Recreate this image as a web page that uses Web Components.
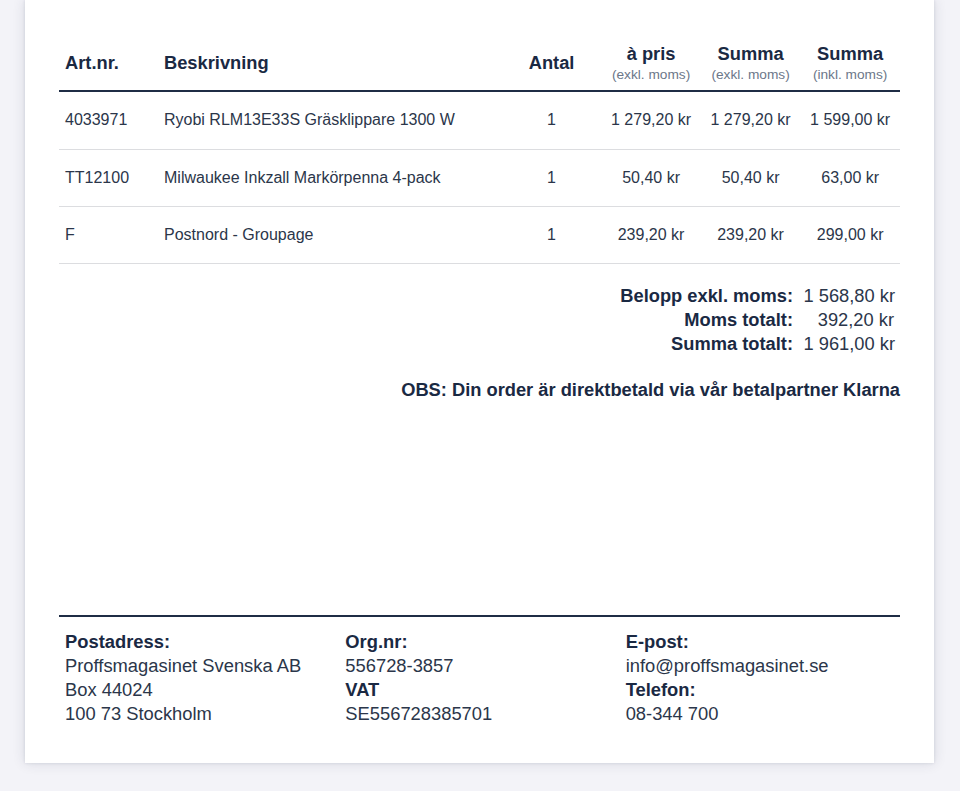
<!DOCTYPE html>
<html lang="sv"><head><meta charset="utf-8"><title>Order</title>
<style>
html,body{margin:0;height:791px;overflow:hidden;background:#f3f3f8;font-family:"Liberation Sans",Arial,sans-serif}
</style></head><body>
<inv-sheet>
  <inv-row head>
    <inv-cell>Art.nr.</inv-cell><inv-cell>Beskrivning</inv-cell>
    <inv-cell center>Antal</inv-cell>
    <inv-cell center sub="(exkl. moms)">à pris</inv-cell>
    <inv-cell center sub="(exkl. moms)">Summa</inv-cell>
    <inv-cell center sub="(inkl. moms)">Summa</inv-cell>
  </inv-row>
  <inv-row first><inv-cell>4033971</inv-cell><inv-cell>Ryobi RLM13E33S Gräsklippare 1300 W</inv-cell><inv-cell center>1</inv-cell><inv-cell center>1 279,20 kr</inv-cell><inv-cell center>1 279,20 kr</inv-cell><inv-cell center>1 599,00 kr</inv-cell></inv-row>
  <inv-row><inv-cell>TT12100</inv-cell><inv-cell>Milwaukee Inkzall Markörpenna 4-pack</inv-cell><inv-cell center>1</inv-cell><inv-cell center>50,40 kr</inv-cell><inv-cell center>50,40 kr</inv-cell><inv-cell center>63,00 kr</inv-cell></inv-row>
  <inv-row><inv-cell>F</inv-cell><inv-cell>Postnord - Groupage</inv-cell><inv-cell center>1</inv-cell><inv-cell center>239,20 kr</inv-cell><inv-cell center>239,20 kr</inv-cell><inv-cell center>299,00 kr</inv-cell></inv-row>
  <inv-totals>
    <inv-total label="Belopp exkl. moms:">1 568,80 kr</inv-total>
    <inv-total label="Moms totalt:" inset>392,20 kr</inv-total>
    <inv-total label="Summa totalt:">1 961,00 kr</inv-total>
  </inv-totals>
  <inv-note>OBS: Din order är direktbetald via vår betalpartner Klarna</inv-note>
  <inv-footer slot="footer">
    <inv-col><b>Postadress:</b><span>Proffsmagasinet Svenska AB</span><span>Box 44024</span><span>100 73 Stockholm</span></inv-col>
    <inv-col><b>Org.nr:</b><span>556728-3857</span><b>VAT</b><span>SE556728385701</span></inv-col>
    <inv-col><b>E-post:</b><span>info@proffsmagasinet.se</span><b>Telefon:</b><span>08-344 700</span></inv-col>
  </inv-footer>
</inv-sheet>
<script>
function def(name, css, html){
  customElements.define(name, class extends HTMLElement{
    constructor(){super();const r=this.attachShadow({mode:'open'});
      r.innerHTML='<style>'+css+'</style>'+html(this);}
  });
}
def('inv-sheet',`:host{display:flex;flex-direction:column;box-sizing:border-box;width:909px;height:763px;margin-left:25px;padding:34px 34px 0;background:#fff;box-shadow:0 0 12px rgba(40,50,80,.14),0 0 3px rgba(40,50,80,.12);color:#1c2b45}
.main{flex:1;display:block}`,()=>`<div class="main"><slot></slot></div><slot name="footer"></slot>`);
def('inv-row',`:host{display:grid;grid-template-columns:99px 343.8px 99.5px 99.5px 99.5px 99.7px;height:57px;align-items:center;border-bottom:1px solid #dcdde0;box-sizing:border-box;font-size:16px;color:#2b364a}
:host([first]){height:58px;padding-bottom:1px}
:host([head]){height:58px;padding-top:2px;align-items:stretch;border-bottom:2px solid #1f2d45;font-weight:700;color:#1a2943;font-size:18.3px}`,()=>`<slot></slot>`);
def('inv-cell',`:host{display:flex;flex-direction:column;justify-content:center;padding:0 6px;white-space:nowrap;min-width:0}
:host([center]){align-items:center;padding:0;text-align:center}
.sub{font-size:13.7px;font-weight:400;color:#6c7789;line-height:18px;margin-top:1px}`,
  (e)=>`<slot></slot>`+(e.hasAttribute('sub')?`<span class="sub">${e.getAttribute('sub')}</span>`:''));
def('inv-totals',`:host{display:flex;flex-direction:column;align-items:stretch;padding-top:19.5px;font-size:18.3px;line-height:24px}`,()=>`<slot></slot>`);
def('inv-total',`:host{display:grid;grid-template-columns:1fr 107px;color:#2b364a}
:host([inset]) .v{padding-right:6px}
b{text-align:right;color:#1a2943}
.v{text-align:right;padding-right:5px;white-space:nowrap}`,(e)=>`<b>${e.getAttribute('label')}</b><span class="v"><slot></slot></span>`);
def('inv-note',`:host{display:block;text-align:right;font-weight:700;font-size:18.3px;line-height:24px;margin-top:22.5px;color:#1a2943}`,()=>`<slot></slot>`);
def('inv-footer',`:host{display:grid;grid-template-columns:repeat(3,1fr);border-top:2px solid #1f2d45;padding:13px 0 37px;height:148px;box-sizing:border-box}`,()=>`<slot></slot>`);
def('inv-col',`:host{display:flex;flex-direction:column;padding:0 6px;font-size:18.35px;line-height:24px;color:#2b364a}
::slotted(b){color:#1a2943}`,()=>`<slot></slot>`);
</script>
</body></html>
